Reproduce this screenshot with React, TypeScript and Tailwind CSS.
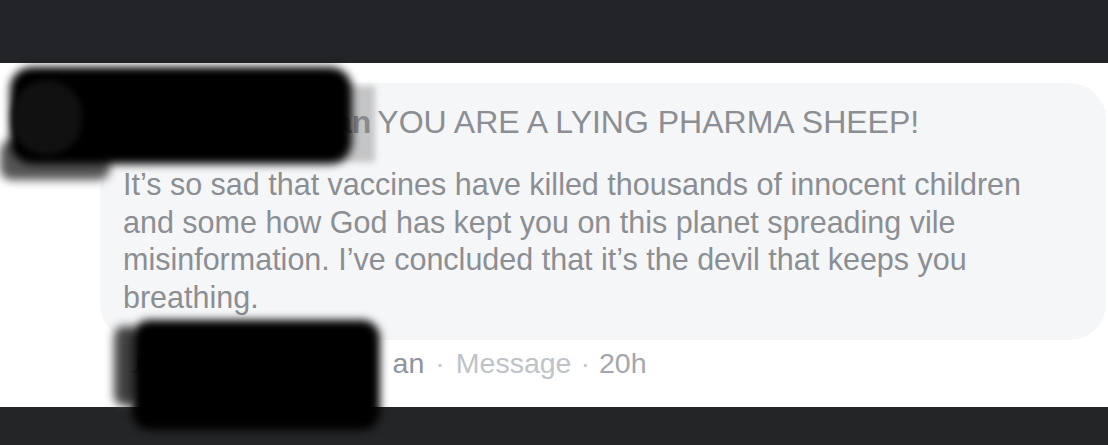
import React from "react";

export default function App() {
  return (
    <div
      className="relative w-[1108px] h-[445px] overflow-hidden bg-white flex flex-col"
      style={{ fontFamily: '"Liberation Sans", Arial, sans-serif' }}
    >
      <div className="h-[63px] shrink-0 bg-[#232427]" />
      <div className="h-[344px] shrink-0 bg-white pt-[20px] pl-[100px] pr-[2px]">
        <div className="rounded-[36px] bg-[#f5f6f8] pl-[23px] pr-[10px] pt-[20px] pb-[24px] text-[#8b8e93]">
          <div className="flex whitespace-nowrap text-[32px] leading-[38px]">
            <span className="pl-[211px] font-bold text-[#5d6372]">an</span>
            <span className="ml-[6px]">YOU ARE A LYING PHARMA SHEEP!</span>
          </div>
          <p className="mt-[25px] text-[30.5px] leading-[37.5px] whitespace-nowrap">
            It’s so sad that vaccines have killed thousands of innocent children
            <br />
            and some how God has kept you on this planet spreading vile
            <br />
            misinformation. I’ve concluded that it’s the devil that keeps you
            <br />
            breathing.
          </p>
        </div>
        <div className="mt-[4px] pl-[22px] flex whitespace-nowrap text-[28.5px] leading-[38px]">
          <span className="text-[#6b7180]">U</span>
          <span className="ml-[250px] text-[#8d949e]">an</span>
          <span className="mx-[11px] text-[#c4c8ce]">·</span>
          <span className="text-[#bec3c9]">Message</span>
          <span className="mx-[9px] text-[#c4c8ce]">·</span>
          <span className="text-[#a3a7ad]">20h</span>
        </div>
      </div>
      <div className="flex-1 bg-[#242527]" />

      {/* redaction scribbles (overlays) */}
      <div className="absolute left-[335px] top-[86px] w-[40px] h-[76px] bg-[#a5a5a5] opacity-60 blur-[3px]" />
      <div className="absolute left-[0px] top-[140px] w-[110px] h-[40px] bg-[#555] rounded-[12px] blur-[5px]" />
      <div className="absolute left-[10px] top-[67px] w-[342px] h-[97px] bg-black rounded-[22px] blur-[4px]" />
      <div className="absolute left-[12px] top-[80px] w-[70px] h-[75px] bg-[#111] rounded-full blur-[3px]" />

      <div className="absolute left-[114px] top-[326px] w-[24px] h-[80px] bg-[#444] rounded-[10px] blur-[5px]" />
      <div className="absolute left-[132px] top-[320px] w-[248px] h-[110px] bg-black rounded-[18px] blur-[4px]" />
    </div>
  );
}
